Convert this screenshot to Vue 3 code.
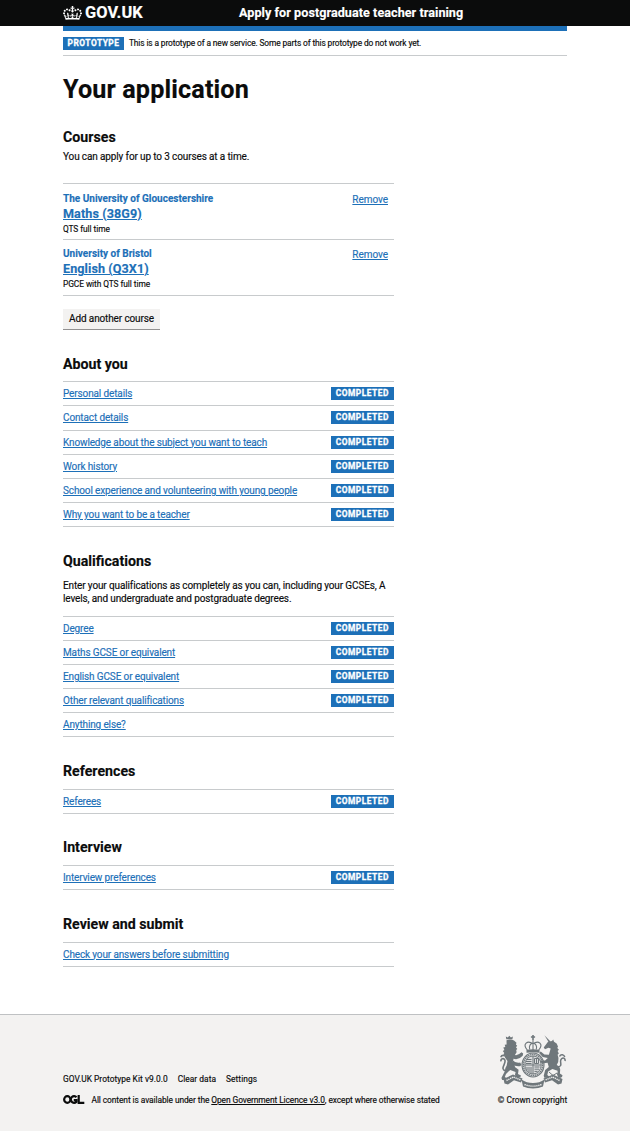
<script setup>
const courses = [
  { provider: 'The University of Gloucestershire', name: 'Maths (38G9)', detail: 'QTS full time' },
  { provider: 'University of Bristol', name: 'English (Q3X1)', detail: 'PGCE with QTS full time' },
]

const sections = [
  {
    title: 'About you',
    tasks: [
      { label: 'Personal details', done: true },
      { label: 'Contact details', done: true },
      { label: 'Knowledge about the subject you want to teach', done: true },
      { label: 'Work history', done: true },
      { label: 'School experience and volunteering with young people', done: true },
      { label: 'Why you want to be a teacher', done: true },
    ],
  },
  {
    title: 'Qualifications',
    intro: 'Enter your qualifications as completely as you can, including your GCSEs, A levels, and undergraduate and postgraduate degrees.',
    tasks: [
      { label: 'Degree', done: true },
      { label: 'Maths GCSE or equivalent', done: true },
      { label: 'English GCSE or equivalent', done: true },
      { label: 'Other relevant qualifications', done: true },
      { label: 'Anything else?', done: false },
    ],
  },
  { title: 'References', tasks: [{ label: 'Referees', done: true }] },
  { title: 'Interview', tasks: [{ label: 'Interview preferences', done: true }] },
  { title: 'Review and submit', tasks: [{ label: 'Check your answers before submitting', done: false }] },
]
</script>

<template>
  <div class="page">
    <header class="header">
      <div class="container header-inner">
        <a class="logo">
          <svg class="crown" viewBox="0 0 132 97" fill="currentColor" fill-rule="evenodd">
            <path d="M25 30.2c3.5 1.5 7.7-.2 9.1-3.7 1.5-3.6-.2-7.8-3.9-9.2-3.6-1.4-7.6.3-9.1 3.9-1.4 3.5.3 7.5 3.9 9zM9 39.5c3.6 1.5 7.8-.2 9.2-3.7 1.5-3.6-.2-7.8-3.9-9.1-3.6-1.5-7.6.2-9.1 3.8-1.4 3.5.3 7.5 3.8 9zM4.4 57.2c3.5 1.5 7.7-.2 9.1-3.8 1.5-3.6-.2-7.7-3.9-9.1-3.5-1.5-7.6.3-9.1 3.8-1.4 3.5.3 7.6 3.9 9.1zm38.3-21.4c3.5 1.5 7.7-.2 9.1-3.8 1.5-3.6-.2-7.7-3.9-9.1-3.6-1.5-7.6.3-9.1 3.8-1.3 3.6.4 7.7 3.9 9.1zm64.4-5.6c-3.6 1.5-7.8-.2-9.1-3.7-1.5-3.6.2-7.8 3.8-9.2 3.6-1.4 7.7.3 9.2 3.9 1.3 3.5-.4 7.5-3.9 9zm15.9 9.3c-3.6 1.5-7.7-.2-9.1-3.7-1.5-3.6.2-7.8 3.7-9.1 3.6-1.5 7.7.2 9.2 3.8 1.5 3.5-.3 7.5-3.8 9zm4.7 17.7c-3.6 1.5-7.8-.2-9.2-3.8-1.5-3.6.2-7.7 3.9-9.1 3.6-1.5 7.7.3 9.2 3.8 1.3 3.5-.4 7.6-3.9 9.1zM89.3 35.8c-3.6 1.5-7.8-.2-9.2-3.8-1.4-3.6.2-7.7 3.9-9.1 3.6-1.5 7.7.3 9.2 3.8 1.4 3.6-.3 7.7-3.9 9.1zM69.7 17.7l8.9 4.7V9.3l-8.9 2.8c-.2-.3-.5-.6-.9-.9L72.4 0H59.6l3.5 11.2c-.3.3-.6.5-.9.9l-8.8-2.8v13.1l8.8-4.7c.3.3.6.7.9.9l-5 15.4v.1c-.2.8-.4 1.6-.4 2.4 0 4.1 3.1 7.5 7 8.1h.2c.3 0 .7.1 1 .1.4 0 .7 0 1-.1h.2c4-.6 7.1-4.1 7.1-8.1 0-.8-.1-1.7-.4-2.4V34l-5.1-15.4c.4-.2.7-.6 1-.9zM66 92.8c16.9 0 32.8 1.1 47.1 3.2 4-16.9 8.9-26.7 14-33.5l-9.6-3.4c1 4.9 1.1 7.2 0 10.2-1.5-1.4-3-4.3-4.2-8.7L108.6 76c2.8-2 5-3.2 7.5-3.3-4.4 9.4-10 11.9-13.6 11.2-4.3-.8-6.3-4.6-5.6-7.9 1-4.7 5.7-5.9 8-.5 4.3-8.7-3-11.4-7.6-8.8 7.1-7.2 7.9-13.5 2.1-21.1-8 6.1-8.1 12.3-4.5 20.8-4.7-5.4-12.1-2.5-9.5 6.2 3.4-5.2 7.9-2 7.2 3.1-.6 4.3-6.4 7.8-13.5 7.2-10.3-.9-10.9-8-11.2-13.8 2.5-.5 7.1 1.8 11 7.3L80.2 60c-4.1 4.4-8 5.3-12.3 5.4 1.4-4.4 8-11.6 8-11.6H55.5s6.4 7.2 7.9 11.6c-4.2-.1-8-1-12.3-5.4l1.4 16.4c3.9-5.500 8.500-7.700 10.900-7.300-.3 5.800-.9 12.800-11.100 13.800-7.200.6-12.900-2.900-13.500-7.200-.7-5 3.800-8.300 7.100-3.100 2.700-8.700-4.600-11.600-9.400-6.200 3.700-8.500 3.600-14.700-4.600-20.800-5.800 7.600-5 13.900 2.200 21.100-4.700-2.600-11.900.1-7.700 8.800 2.300-5.500 7.100-4.200 8.100.5.7 3.300-1.300 7.100-5.700 7.900-3.500.7-9-1.800-13.500-11.200 2.500.1 4.700 1.300 7.500 3.300l-4.700-15.400c-1.200 4.400-2.700 7.200-4.300 8.700-1.100-3-.9-5.300 0-10.200l-9.500 3.400c5 6.900 9.900 16.700 14 33.500 14.800-2.100 30.800-3.200 47.700-3.200z" />
          </svg>
          <span>GOV.UK</span>
        </a>
        <a class="service">Apply for postgraduate teacher training</a>
      </div>
    </header>

    <div class="container">
      <div class="blue-bar"></div>
      <div class="phase">
        <strong class="tag phase-tag">PROTOTYPE</strong>
        <span>This is a prototype of a new service. Some parts of this prototype do not work yet.</span>
      </div>
      <main class="main">
        <h1>Your application</h1>
        <section class="courses">
          <h2>Courses</h2>
          <p class="lead">You can apply for up to 3 courses at a time.</p>
          <ul class="course-list">
            <li v-for="c in courses" :key="c.name" class="course">
              <div>
                <div class="provider">{{ c.provider }}</div>
                <a class="link course-name">{{ c.name }}</a>
                <div class="detail">{{ c.detail }}</div>
              </div>
              <a class="link remove">Remove</a>
            </li>
          </ul>
          <button class="button">Add another course</button>
        </section>
        <section v-for="s in sections" :key="s.title" class="section">
          <h2>{{ s.title }}</h2>
          <p v-if="s.intro" class="intro">{{ s.intro }}</p>
          <ul class="tasks">
            <li v-for="t in s.tasks" :key="t.label" class="task">
              <a class="link">{{ t.label }}</a>
              <strong v-if="t.done" class="tag">COMPLETED</strong>
            </li>
          </ul>
        </section>
      </main>
    </div>

    <footer class="footer">
      <div class="container footer-inner">
        <div class="footer-text">
          <nav class="footer-links">
            <span>GOV.UK Prototype Kit v9.0.0</span><span>Clear data</span><span>Settings</span>
          </nav>
          <div class="licence">
            <svg class="ogl" viewBox="0 0 43 18" fill="none" stroke="#0b0c0c" stroke-width="4.4">
              <ellipse cx="8.6" cy="9" rx="6.3" ry="6.6" />
              <path d="M27 4.6A6.5 6.6 0 1 0 26.6 13.8V10.2H21.5M31.4 0V15.8H42.6" />
            </svg>
            <span>All content is available under the <a class="footer-link">Open Government Licence v3.0</a>, except where otherwise stated</span>
          </div>
        </div>
        <div class="copyright">
          <svg class="arms" viewBox="0 0 66 54" fill="#6f777b">
            <!-- imperial crown -->
            <path d="M32.200 0h1.600v1.300h1.300v1.400h-1.300V5h-1.600V2.700h-1.300V1.300h1.300zM26.500 14.800q6.500-1.300 13 0v3q-6.500-1.200-13 0z" />
            <path d="M27.300 15C22 9 27.500 4.800 33 8.800 38.500 4.800 44 9 38.700 15M33 5v10M29.800 14.500C28.500 11 30.500 8.500 33 8 35.500 8.500 37.500 11 36.200 14.500" fill="none" stroke="#6f777b" stroke-width="1.100" />
            <!-- shield and garter -->
            <ellipse cx="33" cy="30" rx="11" ry="12" fill="#d3d5d6" stroke="#6f777b" stroke-width="1.100" />
            <ellipse cx="33" cy="30" rx="9.600" ry="10.500" fill="none" stroke="#6f777b" stroke-width="1.300" stroke-dasharray="1.300 .8" />
            <ellipse cx="33" cy="30" rx="8.200" ry="9" fill="#dcddde" stroke="#6f777b" stroke-width=".9" />
            <path d="M33 21v18M25 30h16" fill="none" stroke="#6f777b" stroke-width="1" />
            <path d="M26.500 24.500h5M26 26.500h5.500M26 28.500h5.500M34.500 23.500h4v5h-4zM36.500 23.500v5M27 32v3.500M29 32v5.500M31 32v6.500M34.500 32h5M34.500 34.200h4.500M34.500 36.400h3" fill="none" stroke="#6f777b" stroke-width="1" />
            <!-- lion -->
            <path d="M6.300 4.300L5.800 1.600l2 .9L9.300.8l1.600 1.700 2-.9-.5 2.700z" />
            <path d="M6.500 5.200q4-1.700 7.500.2l2.500 2.300-.6 1.800 1.300 1.300-1.200 1.400 1.300 1.700-1.100 1.200.4 2.200-2 3.300-2 6.500q2.500 1.600 2.300 5l3.700 2.700-.6 4.100 3 1.600-.6 1.400h-4.600l-.8-2.200.6-2.800-5.400-2-4.200 4-1.200 3 2.400 1.500-.6 1.500H2.200l-.8-1.900 3.300-6.500q.2-3.600 2-6l.8-4.500-2.400-3.300.1-2.200-1.900-1 1-1.600-1.500-1.900 1.600-1.100-1.100-2.300 2-.7-.6-2.200 1.900-.2z" />
            <path d="M14 19.500q3 2 7.500-2.300l1.700 1.400-.5 2.200q-4.500 5-9.700 2.800zM12.500 25q3 3.500 7.600 2.500l1.200 2-.8 1.600q-5 .8-8.500-2.100z" />
            <path d="M5.800 36C-1 34 6.800 28.500 4.800 24.800 3.500 22.500.5 24 1 26.300M.7 22.300C2 19 5.500 20.500 6.500 22.500" fill="none" stroke="#6f777b" stroke-width="1.600" />
            <!-- unicorn -->
            <path d="M44.400.3l6.100 6.100-1.600 1.100z" />
            <path d="M48 6.800l4-.9 1.200-1.500.8 2.400q3.300 1.300 4 4.600l-.7 1.500 1.600 1.800-1.300 1.400 1.200 2.300-1.200 1.300q1.500 3 .6 7.300l-1.500 3q3 1 3.500 4.800l-.3 3.800 2.600 1.700-.5 1.600h-3.600l-1-2.600.2-3.500-5.200-1.900-4.300 2.500-.8 3.500 1.800 1.500-.6 1.400h-4.200l-.6-2 1.500-5.700 3.600-3.200-1.200-4.200-4.300.6-3-.9-.2-2 5 .2 2.700-2.600-5.100-.9-3.600-4 1.600-1.700 3.700 3 4.500.3 1.800-6.200-2.300-.7-3.400 1.500-1.300-1.700z" />
            <path d="M57.500 32C64 31.500 58.500 26 61.500 23.800 63.500 22 65.500 23.500 65 26M59.500 21.500C61 18.500 64 19.500 64.800 22" fill="none" stroke="#6f777b" stroke-width="1.500" />
            <path d="M49 37l4 3.500 4-2.500 2 5 3-1.500" fill="none" stroke="#6f777b" stroke-width="1" />
            <!-- motto scroll -->
            <path d="M3.500 44L13 39.500l9.500 4-1.500 4-7-2.200-6 4.200-3.500-1zM62.500 44L53 39.500l-9.500 4 1.500 4 7-2.200 6 4.200 3.500-1zM21.500 44.500q5 3.500 11.500 3.500t11.500-3.500l-1.500 7q-4.500 2-10 2t-10-2z" />
            <path d="M6.500 45.500l7-3.500 7 3M59.500 45.500l-7-3.500-7 3M24.500 49.500q8.500 3.300 17 0" fill="none" stroke="#eeeeed" stroke-width="1.400" stroke-dasharray="1.300 .7" />
          </svg>
          <span>© Crown copyright</span>
        </div>
      </div>
    </footer>
  </div>
</template>

<style>
body { margin: 0; background: #fff; }
</style>

<style scoped>
.page {
  min-height: 1131px;
  display: flex;
  flex-direction: column;
  font-family: Roboto, "Liberation Sans", sans-serif;
  font-size: 10px;
  letter-spacing: -.13px;
  color: #0b0c0c;
  -webkit-text-stroke-width: .15px;
}
h1, h2, p, ul { margin: 0; padding: 0; }
ul { list-style: none; }
.container { width: 504px; margin: 0 63px; }
.header { background: #0b0c0c; height: 26px; color: #fff; }
.header-inner { display: grid; grid-template-columns: 176px 1fr; align-items: center; height: 26px; }
.logo { display: flex; align-items: center; gap: 3px; font-size: 16.4px; font-weight: 700; line-height: 26px; letter-spacing: .1px; }
.crown { width: 19px; height: 14px; }
.service { font-size: 12.6px; font-weight: 700; line-height: 26px; letter-spacing: .05px; white-space: nowrap; }
.blue-bar { height: 5px; background: #1d70b8; }
.phase { height: 24px; border-bottom: 1px solid #c8cbcd; display: flex; align-items: center; gap: 5px; font-size: 8.4px; white-space: nowrap; }
.tag {
  display: block;
  box-sizing: border-box;
  width: 62.5px;
  height: 13px;
  background: #1d70b8;
  color: #fff;
  font-size: 8.4px;
  font-weight: 700;
  line-height: 13px;
  letter-spacing: .5px;
  text-align: center;
  -webkit-text-stroke-width: .3px;
}
.phase-tag { width: 61px; }
.main { width: 330.5px; }
h1 { margin-top: 18px; font-size: 25.2px; line-height: 32px; font-weight: 700; letter-spacing: .13px; }
h2 { font-size: 14.2px; line-height: 16px; font-weight: 700; letter-spacing: 0; }
.courses { margin-top: 22.5px; }
.lead { margin-top: 5px; line-height: 13px; }
.course-list { margin-top: 20.5px; border-top: 1px solid #c8cbcd; }
.course { box-sizing: border-box; height: 55.8px; padding: 7.5px 5.5px 0 0; border-bottom: 1px solid #c8cbcd; display: flex; justify-content: space-between; }
.provider { line-height: 14px; font-weight: 700; letter-spacing: 0; color: #1d70b8; }
.course-name { display: block; font-size: 12.6px; line-height: 16px; font-weight: 700; letter-spacing: .08px; }
.detail { font-size: 8.4px; line-height: 14px; letter-spacing: -.08px; }
.link { color: #1d70b8; text-decoration: underline; text-decoration-thickness: 1px; text-underline-offset: 1px; }
.remove { line-height: 15px; letter-spacing: -.05px; }
.button { display: block; margin: 13px 0 0; padding: 0; width: 97px; height: 20px; border: 0; background: #f3f2f1; box-shadow: 0 1px 0 #929191; font: inherit; letter-spacing: inherit; color: #0b0c0c; line-height: 20px; }
.section { padding-top: 25.7px; }
.courses + .section { padding-top: 27px; }
.intro { margin: 10px 0 0; line-height: 13.1px; }
.tasks { margin-top: 9.7px; border-top: 1px solid #c8cbcd; }
.intro + .tasks { margin-top: 10.5px; }
.task { box-sizing: border-box; height: 24.15px; border-bottom: 1px solid #c8cbcd; display: flex; justify-content: space-between; align-items: center; white-space: nowrap; }
.footer { flex: 1; margin-top: 47px; background: #f3f2f1; border-top: 1px solid #bfc1c3; font-size: 8.4px; letter-spacing: -.08px; }
.footer-inner { display: flex; justify-content: space-between; padding-top: 20px; }
.footer-text { padding-top: 38px; white-space: nowrap; }
.footer-links { display: flex; gap: 10px; line-height: 12px; letter-spacing: .04px; }
.licence { display: flex; align-items: center; gap: 7px; margin-top: 9px; line-height: 12px; }
.ogl { width: 21.5px; height: 9px; }
.footer-link { text-decoration: underline; }
.copyright { display: flex; flex-direction: column; align-items: center; width: 69px; white-space: nowrap; }
.arms { width: 66px; height: 54px; }
.copyright span { margin-top: 5px; line-height: 12px; letter-spacing: 0; }
</style>
